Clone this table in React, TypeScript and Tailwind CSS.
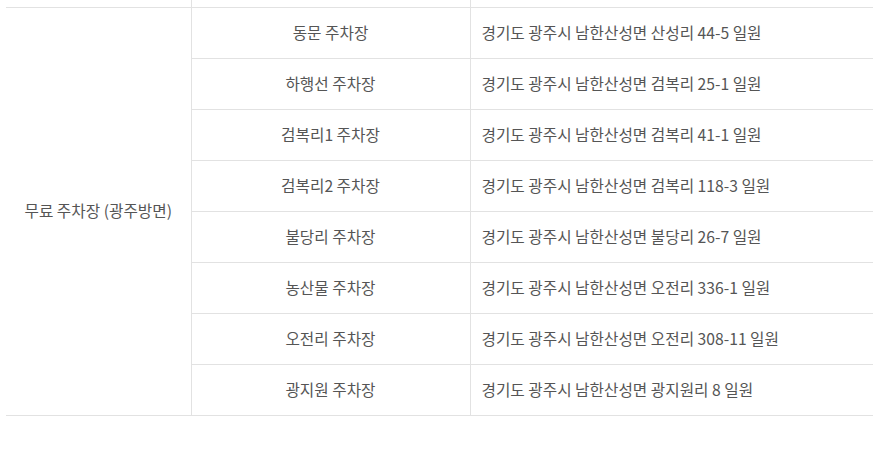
import React from 'react';

const rows = [
  { name: '동문 주차장', addr: '경기도 광주시 남한산성면 산성리 44-5 일원' },
  { name: '하행선 주차장', addr: '경기도 광주시 남한산성면 검복리 25-1 일원' },
  { name: '검복리1 주차장', addr: '경기도 광주시 남한산성면 검복리 41-1 일원' },
  { name: '검복리2 주차장', addr: '경기도 광주시 남한산성면 검복리 118-3 일원' },
  { name: '불당리 주차장', addr: '경기도 광주시 남한산성면 불당리 26-7 일원' },
  { name: '농산물 주차장', addr: '경기도 광주시 남한산성면 오전리 336-1 일원' },
  { name: '오전리 주차장', addr: '경기도 광주시 남한산성면 오전리 308-11 일원' },
  { name: '광지원 주차장', addr: '경기도 광주시 남한산성면 광지원리 8 일원' },
];

export default function App() {
  return (
    <div
      className="w-[873px] h-[466px] bg-white pl-[6px] text-[15.7px] text-[#555]"
      style={{ fontFamily: '"Noto Sans CJK KR", "Noto Sans", sans-serif' }}
    >
      <table className="w-[867px] border-collapse table-fixed">
        <colgroup>
          <col className="w-[185px]" />
          <col className="w-[279px]" />
          <col />
        </colgroup>
        <tbody>
          <tr className="h-[7px]">
            <td className="p-0" />
            <td className="p-0 border-l border-[#e2e2e2]" />
            <td className="p-0 border-l border-[#e2e2e2]" />
          </tr>
          {rows.map((r, i) => (
            <tr key={r.name} className="h-[51px] border-t border-b border-[#e2e2e2]">
              {i === 0 && (
                <td rowSpan={rows.length} className="p-0 text-center align-middle">
                  무료 주차장 (광주방면)
                </td>
              )}
              <td className="p-0 text-center align-middle border-l border-[#e2e2e2]">{r.name}</td>
              <td className="p-0 pl-[11px] align-middle border-l border-[#e2e2e2]">{r.addr}</td>
            </tr>
          ))}
        </tbody>
      </table>
    </div>
  );
}
